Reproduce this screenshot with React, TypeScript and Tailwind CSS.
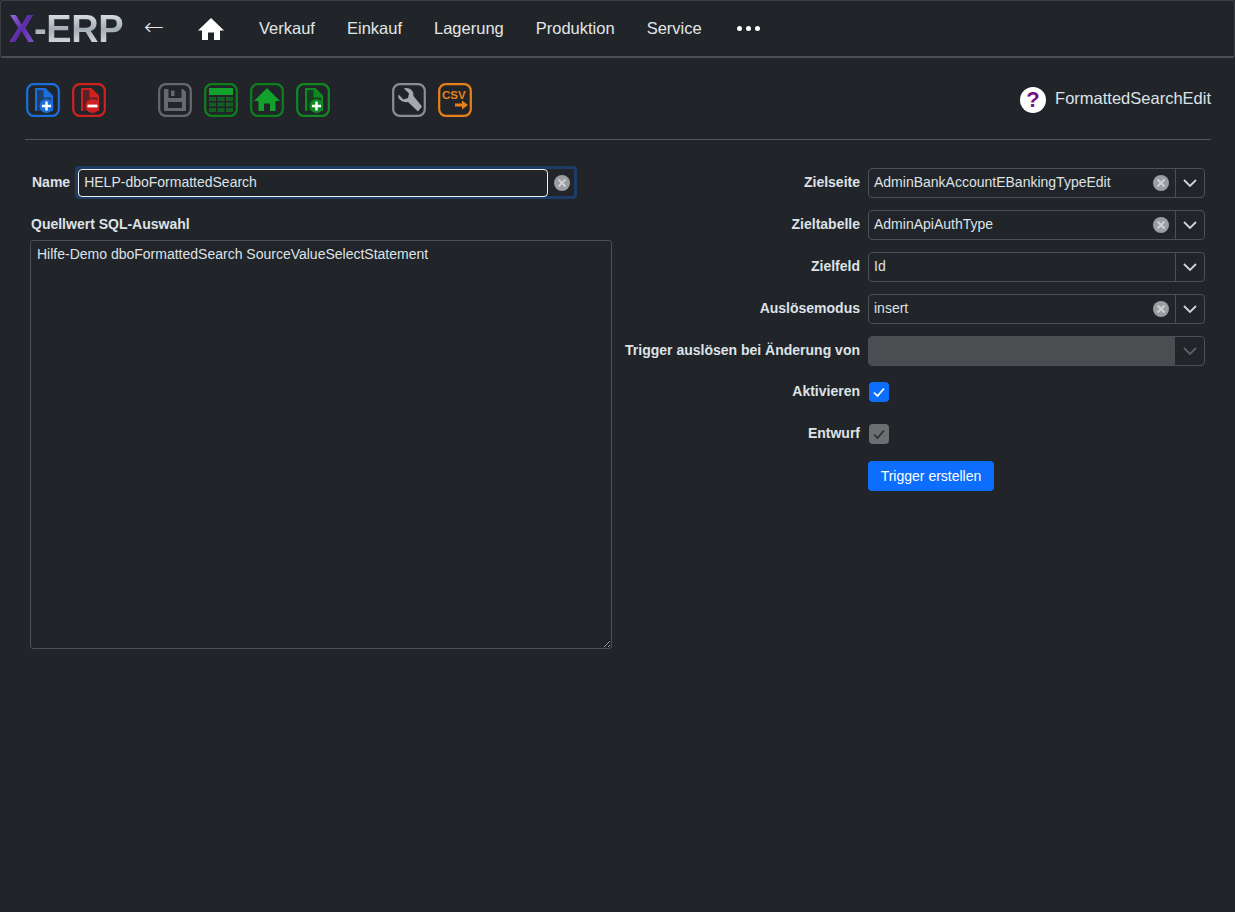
import React from "react";

const Frame = ({ color, children }: { color: string; children: React.ReactNode }) => (
  <svg width="34" height="34" viewBox="0 0 34 34" fill="none" className="block shrink-0">
    <rect x="1.2" y="1.2" width="31.6" height="31.6" rx="6.5" stroke={color} strokeWidth="2.2" />
    {children}
  </svg>
);

const FileBtn = ({ color, light, inner, badge, plus = true }: { color: string; light: string; inner: string; badge: string; plus?: boolean }) => (
  <Frame color={color}>
    <path d="M9 5h10.5L27 12.5V28H9z" fill={light} />
    <path d="M11 7h6.5v7.5H25V28H11z" fill={inner} />
    <circle cx="20.5" cy="23" r="7" fill={badge} />
    {plus ? <path d="M20.5 18.5v9M16 23h9" stroke="#fff" strokeWidth="2.4" /> : <path d="M15.5 23h10" stroke="#fff" strokeWidth="2.8" />}
  </Frame>
);

const Clear = () => (
  <svg width="18" height="18" viewBox="0 0 18 18" className="block shrink-0">
    <circle cx="9" cy="9" r="8" fill="#9a9da1" />
    <path d="M5.5 5.5l7 7M12.5 5.5l-7 7" stroke="#d0d2d4" strokeWidth="1.8" />
  </svg>
);

const Chevron = ({ color = "#ced4da" }: { color?: string }) => (
  <svg width="16" height="16" viewBox="0 0 16 16" fill="none" className="block">
    <path d="M2 5l6 6 6-6" stroke={color} strokeWidth="1.8" />
  </svg>
);

const Select = ({ value, clear = true, disabled = false }: { value?: string; clear?: boolean; disabled?: boolean }) => (
  <div className="flex h-[30px] w-[337px] rounded-[4px] border border-[#495057] overflow-hidden">
    <div className={`flex flex-1 items-center justify-between pl-[5px] pr-[5px] ${disabled ? "bg-[#4b4e51]" : ""}`}>
      <span className="pb-[2px] text-[14px] text-[#dee2e6]">{value}</span>
      {clear && <Clear />}
    </div>
    <div className={`flex w-[29px] items-center justify-center ${disabled ? "" : "border-l border-[#495057]"}`}>
      <Chevron color={disabled ? "#5b6066" : "#ced4da"} />
    </div>
  </div>
);

const Row = ({ label, children, lift = "pb-[2px]" }: { label: string; children: React.ReactNode; lift?: string }) => (
  <div className="flex h-[30px] items-center justify-end gap-2">
    <span className={`${lift} text-[14px] font-bold text-[#dee2e6] whitespace-nowrap`}>{label}</span>
    {children}
  </div>
);

const Check = ({ active }: { active: boolean }) => (
  <div className="w-[337px] pb-[2px] pl-px">
    <div className={`flex h-5 w-5 items-center justify-center rounded-[4px] ${active ? "bg-[#0d6efd]" : "bg-[#6c6e71]"}`}>
      <svg width="14" height="14" viewBox="0 0 14 14" fill="none">
        <path d="M2 7.5l3.5 3.5L12 3.5" stroke={active ? "#fff" : "#2b2f33"} strokeWidth="1.7" />
      </svg>
    </div>
  </div>
);

export default function App() {
  return (
    <div className="min-h-[912px] bg-[#212529] text-[#dee2e6] font-['Liberation_Sans',Arial,sans-serif]">
      <nav className="flex h-[58px] items-center rounded-[3px] border border-[#3b3f44] border-b-2 border-b-[#4a4e53] pl-[8px]">
        <span className="mt-[1px] flex w-[115px] text-[38px] font-bold leading-none tracking-[-0.4px]">
          <span className="bg-gradient-to-br from-[#a77be8] via-[#5b2ba8] to-[#8a5ad8] bg-clip-text text-transparent">X</span>
          <span className="bg-gradient-to-b from-[#e9edf0] via-[#a3adb6] to-[#e2e6ea] bg-clip-text text-transparent">-ERP</span>
        </span>
        <span className="ml-[20px] -mt-[4px] w-[20px] text-[24px] font-['DejaVu_Sans',sans-serif] font-extralight leading-none text-[#e6e8ea]">←</span>
        <svg width="26" height="24" viewBox="0 0 26 24" className="ml-[34px] block">
          <path d="M13 1 L26 13.5 H22 V23 H16 V15.5 H10 V23 H4 V13.5 H0 Z" fill="#fff" />
        </svg>
        <div className="ml-[35px] flex items-center gap-[32px] text-[16.5px] text-[#e3e5e7]">
          <span>Verkauf</span>
          <span>Einkauf</span>
          <span>Lagerung</span>
          <span>Produktion</span>
          <span>Service</span>
          <span className="ml-[3px] flex gap-[4px]">
            <i className="block h-[5px] w-[5px] rounded-full bg-white" />
            <i className="block h-[5px] w-[5px] rounded-full bg-white" />
            <i className="block h-[5px] w-[5px] rounded-full bg-white" />
          </span>
        </div>
      </nav>

      <main className="pl-[25px] pr-[24px]">
        <div className="flex h-[82px] items-center border-b border-[#54585d] pt-[3px]">
          <div className="ml-px flex gap-3">
            <FileBtn color="#1a6fdc" light="#1a6fdc" inner="#1c3f6c" badge="#1a6fdc" />
            <FileBtn color="#d0201f" light="#d0201f" inner="#5c2326" badge="#d0201f" plus={false} />
          </div>
          <div className="ml-[52px] flex gap-3">
            <Frame color="#66696d">
              <path d="M6 6h19l3 3v19H6z" fill="#66696d" />
              <rect x="10.5" y="6" width="13" height="9" fill="#212529" />
              <rect x="13" y="7.5" width="3.5" height="5.5" fill="#66696d" />
              <rect x="10" y="19" width="14" height="6" fill="#212529" />
            </Frame>
            <Frame color="#0f7f1e">
              <rect x="5" y="5" width="24" height="7" fill="#12a12a" />
              <path d="M5 14h7v4H5zM13.5 14h7v4h-7zM22 14h7v4h-7zM5 19.5h7v4H5zM13.5 19.5h7v4h-7zM22 19.5h7v4h-7z" fill="#155f22" />
              <path d="M5 25h7v4H5zM13.5 25h7v4h-7zM22 25h7v4h-7z" fill="#155f22" />
            </Frame>
            <Frame color="#0f7f1e">
              <path d="M17 5 L30 18 H25.5 V28 H20 V20.5 H14 V28 H8.5 V18 H4 Z" fill="#12a12a" />
            </Frame>
            <FileBtn color="#0f8a22" light="#0f8a22" inner="#143f20" badge="#0f8a22" />
          </div>
          <div className="ml-[62px] flex gap-3">
            <Frame color="#8b8e93">
              <path d="M6.5 11.5 11.5 16.5 16 15 17 10.5 12 5.5C16 3.8 22 6.5 21.5 13L30 23.5 26 28.5 16 19C10.5 20 5 16 6.5 11.5Z" fill="#a5a8ac" />
            </Frame>
            <Frame color="#e8811a">
              <text x="4" y="16" fontSize="11.5" fontWeight="700" fill="#e8811a" fontFamily="Liberation Sans">CSV</text>
              <path d="M17 20.5h7v-3l6 4.5-6 4.5v-3h-7z" fill="#e8811a" />
            </Frame>
          </div>
          <div className="ml-auto flex items-center gap-[9px]">
            <span className="flex h-[26px] w-[26px] items-center justify-center rounded-full bg-white text-[22px] font-bold leading-none text-[#7b0f85]">?</span>
            <span className="pb-[3px] text-[16.5px] text-[#dee2e6]">FormattedSearchEdit</span>
          </div>
        </div>

        <div className="flex pt-[26px]">
          <div className="ml-[5px] w-[582px]">
            <div className="flex h-[33px] items-center">
              <span className="ml-[2px] text-[14px] font-bold">Name</span>
              <div className="ml-[5px] flex h-[33px] w-[502px] items-center rounded-[4px] border-[3px] border-[#1d3d68] bg-[#212529]">
                <div className="flex h-[28px] w-[470px] items-center rounded-[4px] border border-[#eef2ee] pl-[5px] text-[14px]">HELP-dboFormattedSearch</div>
                <span className="ml-[5px]"><Clear /></span>
              </div>
            </div>
            <div className="mt-[17px] ml-px text-[14px] font-bold leading-[16px]">Quellwert SQL-Auswahl</div>
            <textarea
              readOnly
              defaultValue="Hilfe-Demo dboFormattedSearch SourceValueSelectStatement"
              className="mt-[8px] block h-[409px] w-[582px] rounded-[3px] border border-[#495057] bg-transparent px-[6px] py-[5px] text-[14px] leading-[17px] text-[#dee2e6] outline-none"
            />
          </div>
          <div className="ml-auto mt-[2px] flex w-[590px] flex-col gap-[12px] pr-[6px]">
            <Row label="Zielseite"><Select value="AdminBankAccountEBankingTypeEdit" /></Row>
            <Row label="Zieltabelle"><Select value="AdminApiAuthType" /></Row>
            <Row label="Zielfeld"><Select value="Id" clear={false} /></Row>
            <Row label="Auslösemodus"><Select value="insert" /></Row>
            <Row label="Trigger auslösen bei Änderung von"><Select disabled clear={false} /></Row>
            <Row label="Aktivieren" lift="pb-[4px]"><Check active /></Row>
            <Row label="Entwurf" lift="pb-[4px]"><Check active={false} /></Row>
            <div className="-mt-px flex justify-start pl-[247px]">
              <button className="h-[30px] w-[126px] rounded-[4px] bg-[#0d6efd] text-[14px] text-white">Trigger erstellen</button>
            </div>
          </div>
        </div>
      </main>
    </div>
  );
}
